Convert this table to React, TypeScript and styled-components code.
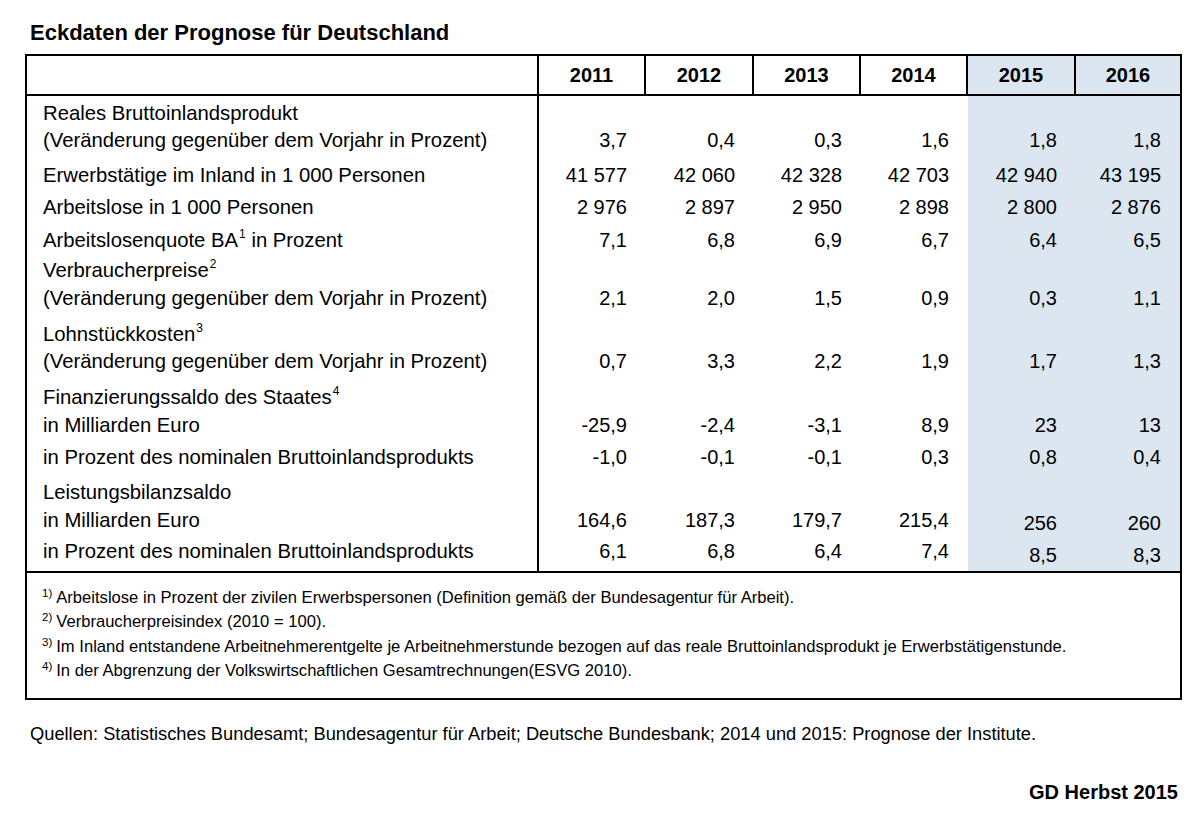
import React from "react";
import styled, { createGlobalStyle } from "styled-components";

const GlobalStyle = createGlobalStyle`
  html, body {
    margin: 0;
    padding: 0;
    background: #ffffff;
  }
  body {
    font-family: "Liberation Sans", Arial, sans-serif;
    color: #000000;
  }
`;

const COLS = "512px 107px 108px 107px 107px 108px 1fr";
const SHADE = "#dce6f1";

const Page = styled.div`
  width: 1157px;
  padding-left: 25px;
`;

const Title = styled.h1`
  margin: 0;
  padding: 21px 0 9px 5px;
  font-size: 22px;
  line-height: 24px;
  font-weight: 700;
`;

const Table = styled.div`
  box-sizing: border-box;
  width: 1157px;
  border: 2px solid #000;
`;

const HeaderRow = styled.div`
  display: grid;
  grid-template-columns: ${COLS};
  height: 40px;
  box-sizing: border-box;
  border-bottom: 2px solid #000;
`;

const HeaderLabel = styled.div`
  border-right: 2px solid #000;
`;

const YearCell = styled.div<{ $shaded: boolean; $last: boolean }>`
  display: flex;
  align-items: center;
  justify-content: center;
  font-size: 20px;
  font-weight: 700;
  background: ${(p) => (p.$shaded ? SHADE : "transparent")};
  border-right: ${(p) => (p.$last ? "none" : "2px solid #000")};
`;

const Body = styled.div`
  border-bottom: 2px solid #000;
`;

const Row = styled.div<{ $h: number }>`
  display: grid;
  grid-template-columns: ${COLS};
  height: ${(p) => p.$h}px;
`;

const LabelCell = styled.div`
  border-right: 2px solid #000;
  padding: 7px 0 0 16px;
  font-size: 20.3px;
  line-height: 20px;
  white-space: nowrap;
`;

const ValueCell = styled.div<{ $shaded: boolean; $drop: number }>`
  text-align: right;
  padding: ${(p) => 7 + p.$drop}px 19px 0 0;
  font-size: 20px;
  line-height: 20px;
  white-space: nowrap;
  background: ${(p) => (p.$shaded ? SHADE : "transparent")};
`;

const Sup = styled.sup`
  font-size: 12px;
  line-height: 0;
  vertical-align: 9px;
  margin-left: 1px;
`;

const Notes = styled.div`
  padding: 13px 0 14px 15px;
  font-size: 16.6px;
  line-height: 24.4px;
`;

const Note = styled.div`
  white-space: nowrap;
`;

const NoteMark = styled.sup`
  font-size: 11.5px;
  line-height: 0;
  vertical-align: 6px;
  margin-right: 4px;
`;

const Sources = styled.p`
  margin: 23px 0 0 0;
  padding-left: 5px;
  font-size: 18.3px;
  line-height: 22px;
  white-space: nowrap;
`;

const Edition = styled.p`
  margin: 35px 0 0 0;
  padding-right: 4px;
  text-align: right;
  font-size: 20px;
  line-height: 24px;
  font-weight: 700;
`;

type Line = {
  label: React.ReactNode;
  h: number;
  values?: string[];
  drop?: number;
};

const years = ["2011", "2012", "2013", "2014", "2015", "2016"];

const change = "(Veränderung gegenüber dem Vorjahr in Prozent)";

const lines: Line[] = [
  { label: "Reales Bruttoinlandsprodukt", h: 27 },
  { label: change, h: 35, values: ["3,7", "0,4", "0,3", "1,6", "1,8", "1,8"] },
  {
    label: "Erwerbstätige im Inland in 1 000 Personen",
    h: 32,
    values: ["41 577", "42 060", "42 328", "42 703", "42 940", "43 195"],
  },
  {
    label: "Arbeitslose in 1 000 Personen",
    h: 33,
    values: ["2 976", "2 897", "2 950", "2 898", "2 800", "2 876"],
  },
  {
    label: (
      <>
        Arbeitslosenquote BA<Sup>1</Sup> in Prozent
      </>
    ),
    h: 30,
    values: ["7,1", "6,8", "6,9", "6,7", "6,4", "6,5"],
  },
  {
    label: (
      <>
        Verbraucherpreise<Sup>2</Sup>
      </>
    ),
    h: 28,
  },
  { label: change, h: 36, values: ["2,1", "2,0", "1,5", "0,9", "0,3", "1,1"] },
  {
    label: (
      <>
        Lohnstückkosten<Sup>3</Sup>
      </>
    ),
    h: 27,
  },
  { label: change, h: 36, values: ["0,7", "3,3", "2,2", "1,9", "1,7", "1,3"] },
  {
    label: (
      <>
        Finanzierungssaldo des Staates<Sup>4</Sup>
      </>
    ),
    h: 28,
  },
  {
    label: "in Milliarden Euro",
    h: 32,
    values: ["-25,9", "-2,4", "-3,1", "8,9", "23", "13"],
  },
  {
    label: "in Prozent des nominalen Bruttoinlandsprodukts",
    h: 35,
    values: ["-1,0", "-0,1", "-0,1", "0,3", "0,8", "0,4"],
  },
  { label: "Leistungsbilanzsaldo", h: 28 },
  {
    label: "in Milliarden Euro",
    h: 31,
    values: ["164,6", "187,3", "179,7", "215,4", "256", "260"],
    drop: 3,
  },
  {
    label: "in Prozent des nominalen Bruttoinlandsprodukts",
    h: 37,
    values: ["6,1", "6,8", "6,4", "7,4", "8,5", "8,3"],
    drop: 4,
  },
];

const notes = [
  "Arbeitslose in Prozent der zivilen Erwerbspersonen (Definition gemäß der Bundesagentur für Arbeit).",
  "Verbraucherpreisindex (2010 = 100).",
  "Im Inland entstandene Arbeitnehmerentgelte je Arbeitnehmerstunde bezogen auf das reale Bruttoinlandsprodukt je Erwerbstätigenstunde.",
  "In der Abgrenzung der Volkswirtschaftlichen Gesamtrechnungen(ESVG 2010).",
];

export default function App() {
  return (
    <>
      <GlobalStyle />
      <Page>
        <Title>Eckdaten der Prognose für Deutschland</Title>
        <Table>
          <HeaderRow>
            <HeaderLabel />
            {years.map((y, i) => (
              <YearCell key={y} $shaded={i >= 4} $last={i === years.length - 1}>
                {y}
              </YearCell>
            ))}
          </HeaderRow>
          <Body>
            {lines.map((line, r) => (
              <Row key={r} $h={line.h}>
                <LabelCell>{line.label}</LabelCell>
                {years.map((y, i) => (
                  <ValueCell
                    key={y}
                    $shaded={i >= 4}
                    $drop={i >= 4 ? line.drop ?? 0 : 0}
                  >
                    {line.values ? line.values[i] : ""}
                  </ValueCell>
                ))}
              </Row>
            ))}
          </Body>
          <Notes>
            {notes.map((n, i) => (
              <Note key={i}>
                <NoteMark>{i + 1})</NoteMark>
                {n}
              </Note>
            ))}
          </Notes>
        </Table>
        <Sources>
          Quellen: Statistisches Bundesamt; Bundesagentur für Arbeit; Deutsche Bundesbank; 2014 und 2015: Prognose der Institute.
        </Sources>
        <Edition>GD Herbst 2015</Edition>
      </Page>
    </>
  );
}
